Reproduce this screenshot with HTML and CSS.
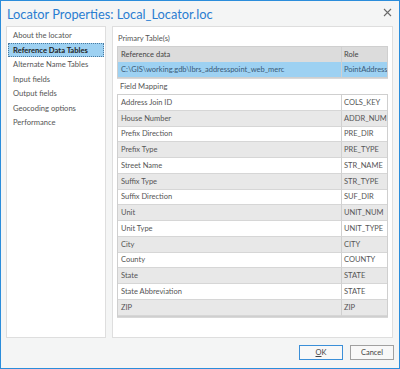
FILE: index.html
```html
<!DOCTYPE html>
<html>
<head>
<meta charset="utf-8">
<link rel="stylesheet" href="styles.css">
</head>
<body>
<div class="window">
  <div class="titlebar">
    <span class="title">Locator Properties: Local_Locator.loc</span>
    <svg class="close" width="9" height="9" viewBox="0 0 9 9"><path d="M1 1L8 8M8 1L1 8" stroke="#6a6a6a" stroke-width="1.1"/></svg>
  </div>
  <div class="main">
    <div class="nav">
      <div class="nav-item">About the locator</div>
      <div class="nav-item selected">Reference Data Tables</div>
      <div class="nav-item">Alternate Name Tables</div>
      <div class="nav-item">Input fields</div>
      <div class="nav-item">Output fields</div>
      <div class="nav-item">Geocoding options</div>
      <div class="nav-item">Performance</div>
    </div>
    <div class="content">
      <div class="label first">Primary Table(s)</div>
      <div class="table primary">
        <div class="cell head">Reference data</div>
        <div class="cell head right">Role</div>
        <div class="cell sel">C:\GIS\working.gdb\lbrs_addresspoint_web_merc</div>
        <div class="cell sel right">PointAddress</div>
      </div>
      <div class="label">Field Mapping</div>
      <div class="table mapping">
        <div class="cell">Address Join ID</div><div class="cell right">COLS_KEY</div>
        <div class="cell alt">House Number</div><div class="cell alt right">ADDR_NUM</div>
        <div class="cell">Prefix Direction</div><div class="cell right">PRE_DIR</div>
        <div class="cell alt">Prefix Type</div><div class="cell alt right">PRE_TYPE</div>
        <div class="cell">Street Name</div><div class="cell right">STR_NAME</div>
        <div class="cell alt">Suffix Type</div><div class="cell alt right">STR_TYPE</div>
        <div class="cell">Suffix Direction</div><div class="cell right">SUF_DIR</div>
        <div class="cell alt">Unit</div><div class="cell alt right">UNIT_NUM</div>
        <div class="cell">Unit Type</div><div class="cell right">UNIT_TYPE</div>
        <div class="cell alt">City</div><div class="cell alt right">CITY</div>
        <div class="cell">County</div><div class="cell right">COUNTY</div>
        <div class="cell alt">State</div><div class="cell alt right">STATE</div>
        <div class="cell">State Abbreviation</div><div class="cell right">STATE</div>
        <div class="cell alt">ZIP</div><div class="cell alt right">ZIP</div>
      </div>
    </div>
  </div>
  <div class="footer">
    <button class="btn default"><u>O</u>K</button>
    <button class="btn">Cancel</button>
  </div>
</div>
</body>
</html>
```
FILE: styles.css
```css
html, body {
  margin: 0;
  padding: 0;
}
body {
  font-family: Lato, "Noto Sans", sans-serif;
  background: #ffffff;
}
.window {
  width: 400px;
  height: 369px;
  box-sizing: border-box;
  border: 1px solid #2b8ddb;
  background: #f4f5f5;
  display: flex;
  flex-direction: column;
}
.titlebar {
  height: 25px;
  display: flex;
  align-items: center;
  justify-content: space-between;
  padding: 0 6px 0 6px;
  box-sizing: border-box;
}
.title {
  color: #2a7dd1;
  font-size: 12.8px;
}
.close {
  margin-top: -2px;
  margin-right: 1px;
}
.main {
  display: flex;
  gap: 6px;
  padding: 0 6px 0 5px;
  height: 312px;
}
.nav {
  width: 100px;
  box-sizing: border-box;
  background: #fff;
  border: 1px solid #dedede;
  padding: 1px 1px 0 1px;
  display: flex;
  flex-direction: column;
}
.nav-item {
  height: 14.5px;
  line-height: 14.5px;
  font-size: 7.6px;
  color: #555;
  padding-left: 5px;
  white-space: nowrap;
  box-sizing: border-box;
}
.nav-item.selected {
  background: #9dd1f2;
  color: #222;
  font-weight: bold;
  outline: 1px dotted #4a7aa0;
  outline-offset: -1px;
}
.content {
  flex: 1;
  background: #fff;
  border: 1px solid #dedede;
  box-sizing: border-box;
  padding: 0 4px;
}
.label {
  font-size: 7.6px;
  color: #555;
  height: 15px;
  line-height: 15px;
  padding-left: 3px;
}
.label.first {
  margin-top: 4px;
  height: 15px;
  padding-left: 1px;
}
.table {
  display: grid;
  grid-template-columns: 1fr 46px;
  border: 1px solid #cfcfcf;
  box-shadow: 0 1px 0 #d8d8d8;
}
.primary {
  margin-bottom: 1px;
  grid-auto-rows: 15px;
}
.mapping {
  grid-auto-rows: 15.75px;
}
.cell {
  font-size: 7.5px;
  color: #555;
  padding-left: 3px;
  display: flex;
  align-items: center;
  border-bottom: 1px solid #d6d6d6;
  white-space: nowrap;
  overflow: hidden;
  background: #fff;
}
.cell.right {
  border-left: 1px solid #d0d0d0;
  padding-left: 2px;
}
.cell.alt {
  background: #e8e8e8;
}
.cell.head {
  background: #dcdcdc;
  color: #444;
  border-bottom: none;
}
.cell.sel {
  background: #9dd1f2;
  color: #3a5a78;
  border-bottom: none;
}
.footer {
  flex: 1;
  display: flex;
  justify-content: flex-end;
  align-items: center;
  gap: 7px;
  padding: 0 5px 2px 0;
}
.btn {
  width: 44px;
  height: 15px;
  font-family: Lato, "Noto Sans", sans-serif;
  font-size: 7.5px;
  color: #444;
  background: #f8f8f8;
  border: 1px solid #a0a0a0;
  padding: 0;
}
.btn.default {
  border-color: #3b8fd8;
}
```
